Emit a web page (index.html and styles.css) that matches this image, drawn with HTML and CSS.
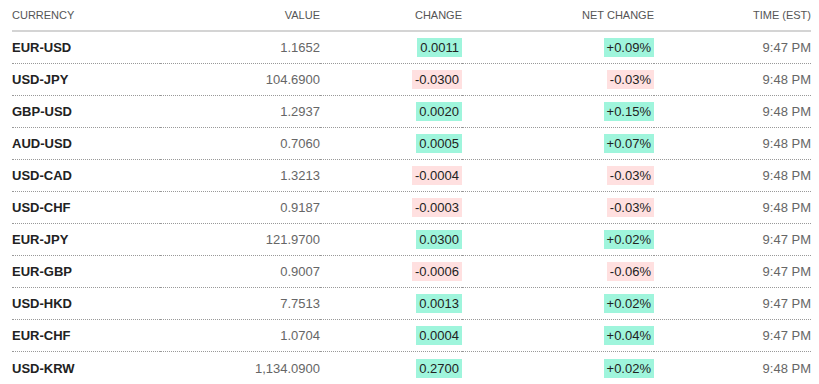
FILE: index.html
```html
<!DOCTYPE html>
<html lang="en">
<head>
    <meta charset="UTF-8">
    <meta name="viewport" content="width=device-width, initial-scale=1.0">
    <title>Currencies</title>
    <link rel="stylesheet" href="styles.css">
</head>
<body>
    <table class="fx-table">
        <thead>
            <tr>
                <th class="col-name">Currency</th>
                <th class="col-value">Value</th>
                <th class="col-change">Change</th>
                <th class="col-net">Net Change</th>
                <th class="col-time">Time (EST)</th>
            </tr>
        </thead>
        <tbody>
            <tr>
                <td class="name">EUR-USD</td>
                <td class="value">1.1652</td>
                <td><span class="badge up">0.0011</span></td>
                <td><span class="badge up">+0.09%</span></td>
                <td class="time">9:47 PM</td>
            </tr>
            <tr>
                <td class="name">USD-JPY</td>
                <td class="value">104.6900</td>
                <td><span class="badge down">-0.0300</span></td>
                <td><span class="badge down">-0.03%</span></td>
                <td class="time">9:48 PM</td>
            </tr>
            <tr>
                <td class="name">GBP-USD</td>
                <td class="value">1.2937</td>
                <td><span class="badge up">0.0020</span></td>
                <td><span class="badge up">+0.15%</span></td>
                <td class="time">9:48 PM</td>
            </tr>
            <tr>
                <td class="name">AUD-USD</td>
                <td class="value">0.7060</td>
                <td><span class="badge up">0.0005</span></td>
                <td><span class="badge up">+0.07%</span></td>
                <td class="time">9:48 PM</td>
            </tr>
            <tr>
                <td class="name">USD-CAD</td>
                <td class="value">1.3213</td>
                <td><span class="badge down">-0.0004</span></td>
                <td><span class="badge down">-0.03%</span></td>
                <td class="time">9:48 PM</td>
            </tr>
            <tr>
                <td class="name">USD-CHF</td>
                <td class="value">0.9187</td>
                <td><span class="badge down">-0.0003</span></td>
                <td><span class="badge down">-0.03%</span></td>
                <td class="time">9:48 PM</td>
            </tr>
            <tr>
                <td class="name">EUR-JPY</td>
                <td class="value">121.9700</td>
                <td><span class="badge up">0.0300</span></td>
                <td><span class="badge up">+0.02%</span></td>
                <td class="time">9:47 PM</td>
            </tr>
            <tr>
                <td class="name">EUR-GBP</td>
                <td class="value">0.9007</td>
                <td><span class="badge down">-0.0006</span></td>
                <td><span class="badge down">-0.06%</span></td>
                <td class="time">9:47 PM</td>
            </tr>
            <tr>
                <td class="name">USD-HKD</td>
                <td class="value">7.7513</td>
                <td><span class="badge up">0.0013</span></td>
                <td><span class="badge up">+0.02%</span></td>
                <td class="time">9:47 PM</td>
            </tr>
            <tr>
                <td class="name">EUR-CHF</td>
                <td class="value">1.0704</td>
                <td><span class="badge up">0.0004</span></td>
                <td><span class="badge up">+0.04%</span></td>
                <td class="time">9:47 PM</td>
            </tr>
            <tr>
                <td class="name">USD-KRW</td>
                <td class="value">1,134.0900</td>
                <td><span class="badge up">0.2700</span></td>
                <td><span class="badge up">+0.02%</span></td>
                <td class="time">9:48 PM</td>
            </tr>
        </tbody>
    </table>
</body>
</html>
```

FILE: styles.css
```css
/* Global Styles */
* {
    margin: 0;
    padding: 0;
    box-sizing: border-box;
}

body {
    font-family: "Liberation Sans", Arial, sans-serif;
    background-color: #fff;
    color: #333;
    padding-left: 12px;
}

.fx-table {
    width: 799px;
    border-collapse: separate;
    border-spacing: 0;
}

.fx-table th {
    height: 32px;
    font-size: 11px;
    font-weight: normal;
    text-transform: uppercase;
    color: #555;
    text-align: right;
    border-bottom: 2px solid #d4d4d4;
    vertical-align: middle;
}

.fx-table td {
    height: 32px;
    font-size: 13px;
    text-align: right;
    border-bottom: 1px dotted #999;
    vertical-align: middle;
}

.fx-table tbody tr:last-child td {
    border-bottom: none;
}

.fx-table th.col-name,
.fx-table td.name {
    text-align: left;
}

.col-name { width: 148px; }
.col-value { width: 160px; }
.col-change { width: 142px; }
.col-net { width: 192px; }
.col-time { width: 157px; }

.name {
    font-weight: bold;
    color: #222;
}

.value,
.time {
    color: #666;
}

.badge {
    display: inline-block;
    padding: 2px 3px;
    line-height: 15px;
    color: #222;
}

.badge.up {
    background-color: #9ff5dc;
}

.badge.down {
    background-color: #ffe0e0;
}
```
